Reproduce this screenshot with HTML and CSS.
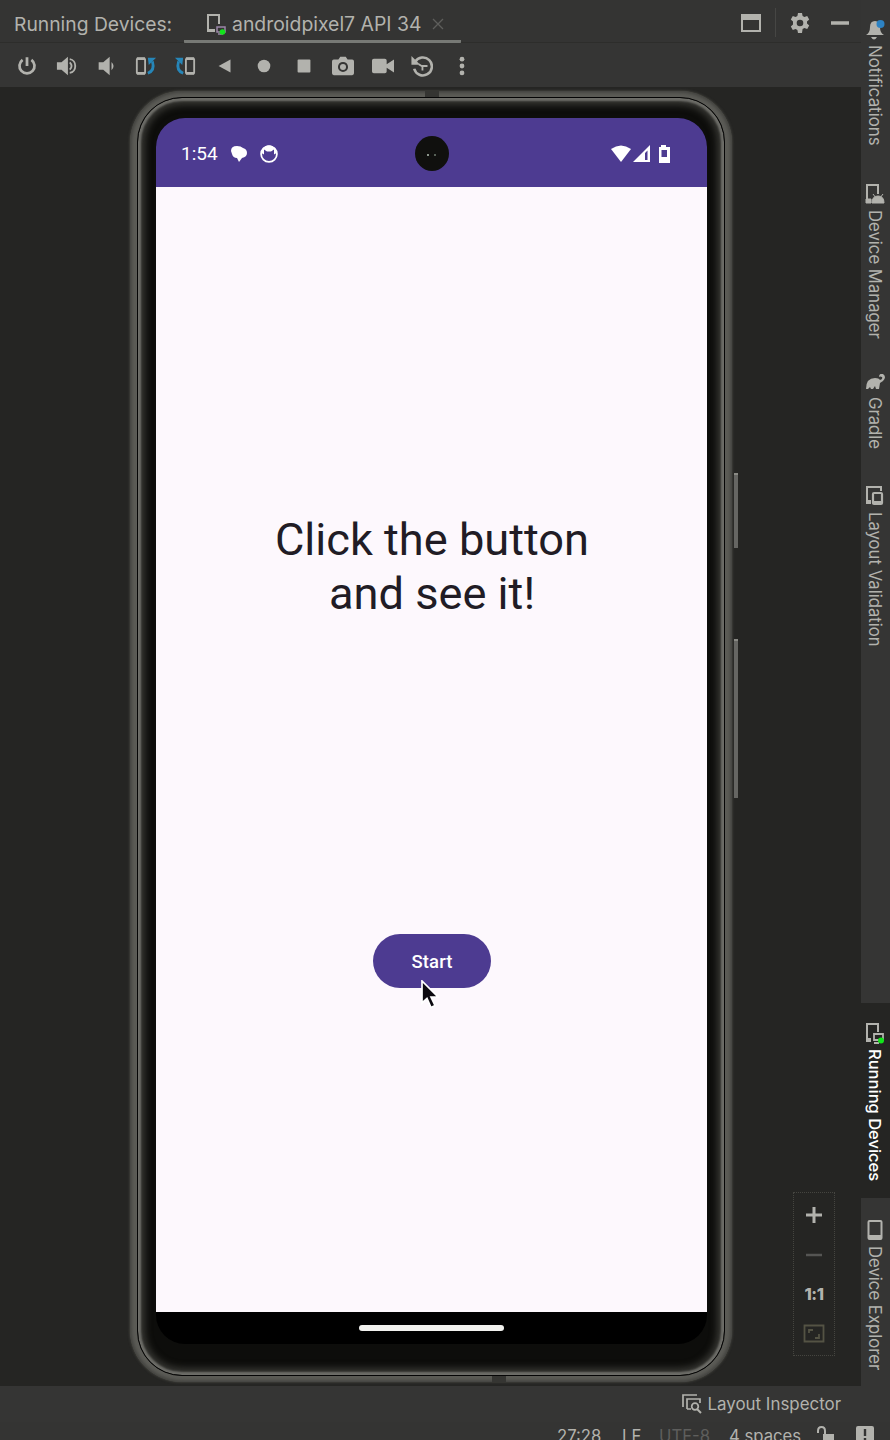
FILE: index.html
```html
<!DOCTYPE html>
<html lang="en">
<head>
<meta charset="utf-8">
<title>Running Devices</title>
<link rel="stylesheet" href="styles.css">
</head>
<body>
<div class="ide">
  <main class="panel">
    <header class="titlebar">
      <span class="title">Running Devices:</span>
      <div class="device-tab">
        <svg width="20" height="22" viewBox="0 0 20 22"><path d="M9 17H2V2h11v9" fill="none" stroke="currentColor" stroke-width="2"/><path d="M1 16h8v3H1z" fill="currentColor"/><path d="M11 14h8v5h-8zM12 21h5" fill="none" stroke="#9a86a8" stroke-width="1.500"/><circle cx="16.500" cy="19" r="2.800" fill="#12e51b"/></svg>
        <span class="tab-name">androidpixel7 API 34</span>
        <svg class="close" width="12" height="12" viewBox="0 0 12 12"><path d="M1 1l10 10M11 1L1 11" stroke="currentColor" stroke-width="1.300"/></svg>
      </div>
      <div class="window-actions">
        <svg width="20" height="20" viewBox="0 0 20 20"><path d="M0 1h20v18H0zM2 7v10h16V7z" fill="currentColor" fill-rule="evenodd"/></svg>
        <span class="divider"></span>
        <svg class="gear" width="20" height="20" viewBox="0 0 20 20"><path d="M8 0h4l.6 2.900 1.800 1 2.800-1 2 3.500-2.200 2v2.200l2.200 2-2 3.500-2.800-1-1.800 1L12 20H8l-.6-2.900-1.800-1-2.800 1-2-3.500 2.200-2V8.400l-2.200-2 2-3.500 2.800 1 1.800-1zM10 6.700a3.300 3.300 0 1 0 0 6.600 3.300 3.300 0 0 0 0-6.600z" fill="currentColor" fill-rule="evenodd"/></svg>
        <svg width="20" height="20" viewBox="0 0 20 20"><path d="M1 10h18" stroke="currentColor" stroke-width="3.500"/></svg>
      </div>
    </header>

    <nav class="toolbar">
      <span class="tool"><svg width="24" height="24" viewBox="0 0 24 24"><path d="M7.200 5.200a8.200 8.200 0 1 0 9.600 0M12 2.500v9.500" fill="none" stroke="currentColor" stroke-width="3"/></svg></span>
      <span class="tool"><svg width="24" height="24" viewBox="0 0 24 24"><path d="M1 8h5l7-6v20l-7-6H1z" fill="currentColor"/><path d="M15 8q4 4 0 8M15 4.500c8 1 8 14 0 15" fill="none" stroke="currentColor" stroke-width="2"/></svg></span>
      <span class="tool"><svg width="24" height="24" viewBox="0 0 24 24"><path d="M4 8h5l7-6v20l-7-6H4zM18 7.500q4.500 4.500 0 9z" fill="currentColor"/></svg></span>
      <span class="tool"><svg width="24" height="24" viewBox="0 0 24 24"><rect x="2" y="4" width="9" height="16" rx="1" fill="none" stroke="currentColor" stroke-width="2"/><path d="M2 4h9M2 20h9" stroke="currentColor" stroke-width="3"/><path d="M14 20q8-3 5-13" fill="none" stroke="#2686b8" stroke-width="3"/><path d="M14 3h9l-8 8z" fill="#2686b8"/></svg></span>
      <span class="tool"><svg width="24" height="24" viewBox="0 0 24 24"><rect x="13" y="4" width="9" height="16" rx="1" fill="none" stroke="currentColor" stroke-width="2"/><path d="M13 4h9M13 20h9" stroke="currentColor" stroke-width="3"/><path d="M10 20q-8-3-5-13" fill="none" stroke="#2686b8" stroke-width="3"/><path d="M10 3H1l8 8z" fill="#2686b8"/></svg></span>
      <span class="tool"><svg width="24" height="24" viewBox="0 0 24 24"><path d="M18 5v14L5 12z" fill="currentColor"/></svg></span>
      <span class="tool"><svg width="24" height="24" viewBox="0 0 24 24"><circle cx="12" cy="12" r="6.900" fill="currentColor"/></svg></span>
      <span class="tool"><svg width="24" height="24" viewBox="0 0 24 24"><rect x="5" y="5" width="14" height="14" rx="1" fill="currentColor"/></svg></span>
      <span class="tool"><svg width="24" height="24" viewBox="0 0 24 24"><path d="M7 5l2-3h6l2 3h5q2 0 2 2v13q0 2-2 2H2q-2 0-2-2V7q0-2 2-2zM12 7.500a5.500 5.500 0 1 0 0 11 5.500 5.500 0 0 0 0-11z" fill="currentColor" fill-rule="evenodd"/><circle cx="12" cy="13" r="3.300" fill="currentColor"/></svg></span>
      <span class="tool"><svg width="24" height="24" viewBox="0 0 24 24"><path d="M2 4h12q2 0 2 2v4l8-5v14l-8-5v4q0 2-2 2H2q-2 0-2-2V6q0-2 2-2z" fill="currentColor"/></svg></span>
      <span class="tool"><svg width="24" height="24" viewBox="0 0 24 24"><path d="M4.500 7.500a9.800 9.800 0 1 1-1 7.500" fill="none" stroke="currentColor" stroke-width="2.800"/><path d="M.5 1v9.500H10z" fill="currentColor"/><path d="M12.500 17v-5H18M8.500 10l4 2.500" fill="none" stroke="currentColor" stroke-width="2"/></svg></span>
      <span class="tool"><svg width="24" height="24" viewBox="0 0 24 24"><g fill="currentColor"><circle cx="12" cy="4.500" r="2.600"/><circle cx="12" cy="12" r="2.600"/><circle cx="12" cy="19.500" r="2.600"/></g></svg></span>
    </nav>

    <section class="stage">
      <div class="phone">
        <div class="bezel">
          <div class="screen">
            <div class="status">
              <span class="clock">1:54</span>
              <svg width="18" height="18" viewBox="0 0 18 18"><path d="M1 6q0-5 6-5 4 0 6 2 4 1 4 5 0 4-5 5l-3 4-2-4q-4 0-5-4z" fill="#fff"/></svg>
              <svg class="cat" width="18" height="18" viewBox="0 0 18 18"><circle cx="9" cy="9" r="7.900" fill="none" stroke="#fff" stroke-width="1.800"/><path d="M4 9.500V4.500L7 6.500h4l3-2v5l2.500-1.500-1.500-5-4-2.500H7L3 3 1.500 8z" fill="#fff"/></svg>
              <svg class="radios" width="60" height="18" viewBox="0 0 60 18"><path d="M0 4q10-7 20 0L10 17z" fill="#fff"/><path d="M22 17h17V0zM34 8v7h2.500V5.500z" fill="#fff" fill-rule="evenodd"/><path d="M48 2h2V0h5v2h4v16H48zM50.500 5v7h5.500V5z" fill="#fff" fill-rule="evenodd"/></svg>
              <span class="camera"></span>
            </div>
            <div class="app">
              <h1 class="headline">Click the button<br>and see it!</h1>
              <button class="start">Start</button>
              <svg class="cursor" width="20" height="29" viewBox="0 0 20 29"><path d="M2 1v22l5-4.500 4 9 4-2-4-8.500h7z" fill="#0c0a10" stroke="#fff" stroke-width="1.700"/></svg>
            </div>
            <div class="navbar"><span class="handle"></span></div>
          </div>
        </div>
        <i class="antenna top"></i><i class="antenna low"></i>
        <i class="key power"></i><i class="key volume"></i>
      </div>
      <div class="zoom">
        <svg width="20" height="20" viewBox="0 0 20 20"><path d="M10 2v16M2 10h16" stroke="currentColor" stroke-width="3"/></svg>
        <svg class="dim" width="20" height="20" viewBox="0 0 20 20"><path d="M2 10h16" stroke="currentColor" stroke-width="2.500"/></svg>
        <span class="ratio">1:1</span>
        <svg class="fit" width="22" height="20" viewBox="0 0 22 20"><path d="M1.500 1.500h19v16h-19zM6 9V6h4M12 14h4v-4" fill="none" stroke="currentColor" stroke-width="1.800"/></svg>
      </div>
    </section>
  </main>

  <aside class="stripe">
    <div class="tool-tab notifications"><svg width="20" height="22" viewBox="0 0 20 22"><path d="M1 16q4-2 4-8 0-6 5-6 5 0 5 6 0 6 4 8zM6 18h6q-3 5-6 0z" fill="currentColor"/><circle cx="15.500" cy="5" r="4" fill="#2d83c4"/></svg><span>Notifications</span></div>
    <div class="tool-tab manager"><svg width="20" height="22" viewBox="0 0 20 22"><path d="M6 18H2V2h11v9" fill="none" stroke="currentColor" stroke-width="2"/><path d="M1 16h5v4H1zM7 20q0-7 6-7 6 0 6 7zM8 11l3 4M18 11l-3 4" fill="currentColor" stroke="currentColor"/></svg><span>Device Manager</span></div>
    <div class="tool-tab gradle"><svg width="21" height="16" viewBox="0 0 21 16"><path d="M1 15Q1 4 10 4q4 0 5 2 3-1 2-3-2-1-3 0 0-4 4-3 4 3 0 7l-3 2-1 6h-3l-1-3-2 3H6l-1-2-2 2z" fill="currentColor"/></svg><span>Gradle</span></div>
    <div class="tool-tab validation"><svg width="20" height="22" viewBox="0 0 20 22"><path d="M6 18H2V2h14v4" fill="none" stroke="currentColor" stroke-width="2"/><rect x="8" y="8" width="9" height="11" rx="1" fill="none" stroke="currentColor" stroke-width="2.200"/><path d="M1 15h5v4H1zM8 16h9v3H8z" fill="currentColor"/></svg><span>Layout Validation</span></div>
    <div class="tool-tab active"><svg width="20" height="22" viewBox="0 0 20 22"><path d="M6 18H2V2h11v8" fill="none" stroke="currentColor" stroke-width="2"/><path d="M1 16h5v4H1z" fill="currentColor"/><path d="M9 12h9v6H9zM9 21h5" fill="none" stroke="currentColor" stroke-width="1.800"/><circle cx="16" cy="18.500" r="3" fill="#12e51b"/></svg><span>Running Devices</span></div>
    <div class="tool-tab explorer"><svg width="20" height="22" viewBox="0 0 20 22"><rect x="3.500" y="2" width="13" height="18" rx="1" fill="none" stroke="currentColor" stroke-width="2"/><path d="M3 16h14v4H3z" fill="currentColor"/></svg><span>Device Explorer</span></div>
  </aside>

  <footer class="footer">
    <div class="inspector">
      <svg width="20" height="20" viewBox="0 0 20 20"><path d="M1 13V1h14M5 15h4M5 15V5h13v4" fill="none" stroke="currentColor" stroke-width="1.700"/><circle cx="13" cy="12.500" r="3.300" fill="none" stroke="currentColor" stroke-width="1.700"/><path d="M15 15l4 4" stroke="currentColor" stroke-width="2"/></svg>
      <span>Layout Inspector</span>
    </div>
    <div class="info">
      <span class="position">27:28</span><span class="eol">LF</span><span class="encoding">UTF-8</span><span class="indent">4 spaces</span>
      <svg class="lock" width="18" height="20" viewBox="0 0 18 20"><path d="M2 7V5q0-4 3.500-4T9 5v4" fill="none" stroke="currentColor" stroke-width="2"/><path d="M7 8h11v11H7z" fill="currentColor"/></svg>
      <svg class="alert" width="18" height="20" viewBox="0 0 18 20"><path d="M2 0h14q2 0 2 2v13q0 2-2 2H2q-2 0-2-2V2q0-2 2-2zM7.800 3v7h2.400V3zM7.800 12v2.500h2.400V12z" fill="currentColor" fill-rule="evenodd"/></svg>
    </div>
  </footer>
</div>
</body>
</html>
```
FILE: styles.css
```css
* { box-sizing: border-box; }
html { overflow: hidden; }
body { margin: 0; font-family: Inter, "Liberation Sans", sans-serif; color: #b2b2ad; overflow: hidden; }
svg { display: block; flex: none; }

.ide { width: 890px; height: 1440px; display: grid; grid-template: 1386px 54px / 861px 29px; background: #353534; overflow: hidden; }
.panel { display: grid; grid-template-rows: 43px 44px 1fr; min-height: 0; }

.titlebar { display: flex; align-items: stretch; background: #343433; border-bottom: 1px solid #2d2d2b; padding-left: 14px; }
.title { width: 170px; line-height: 49px; font-size: 19.300px; white-space: nowrap; }
.device-tab { width: 277px; height: 44px; display: flex; align-items: center; gap: 6px; padding: 7px 0 0 22px; border-bottom: 4px solid #777975; border-radius: 2px; }
.tab-name { font-size: 19.400px; width: 194px; white-space: nowrap; }
.close { color: #5e5e5c; }
.window-actions { flex: 1; display: flex; align-items: center; justify-content: flex-end; padding: 3px 11px 0 0; }
.divider { width: 1px; height: 29px; background: #464644; margin: 0 14px; }
.gear { margin-right: 20px; }

.toolbar { display: flex; align-items: center; padding: 2px 0 0 7.500px; background: #353534; }
.tool { width: 39.500px; display: flex; justify-content: center; }
.tool svg { width: 22px; height: 22px; }

.stage { position: relative; background: #252523; padding: 4px 0 0 130px; }
.phone { position: relative; width: 602px; height: 1291px; padding: 6px 7px; border-radius: 52px; background: #5c5c57; box-shadow: 0 0 3px #55554d, inset 0 0 4px 1px #393936; }
.bezel { height: 100%; border: 1px solid #050505; border-radius: 45px; padding: 20px 18px 31px; background: #0d0d0b; box-shadow: inset 0 0 2px 3px #6d6d68, inset 0 0 7px 7px #373733; }
.screen { width: 551px; height: 1226px; display: flex; flex-direction: column; background: #000; border-radius: 29px; overflow: hidden; }
.status { position: relative; height: 69px; flex: none; background: #4d3b91; display: flex; align-items: center; padding: 2px 36px 0 25px; color: #fff; }
.clock { font: 19px Roboto, sans-serif; width: 49px; }
.cat { margin-left: 12px; }
.radios { margin-left: auto; }
.camera { position: absolute; left: 259px; top: 18px; width: 34px; height: 35px; border-radius: 50%; background: radial-gradient(circle at 13px 19px, #8b958b 0 1px, transparent 1.500px), radial-gradient(circle at 20px 19px, #566056 0 1px, transparent 1.500px), #10100e; }
.app { position: relative; height: 1125px; flex: none; background: #fdf8fd; display: flex; flex-direction: column; align-items: center; padding-top: 326px; }
.headline { margin: 0 0 0 1px; font: 400 45.200px/54px Roboto, sans-serif; color: #211c25; text-align: center; white-space: nowrap; }
.start { margin-top: 313px; width: 118px; height: 54px; padding: 2px 0 0 1px; border: 0; border-radius: 27px; background: #4d3b91; color: #fff; font: 500 18.500px Roboto, sans-serif; letter-spacing: .1px; }
.cursor { position: absolute; left: 264px; top: 793px; }
.navbar { flex: 1; display: flex; align-items: flex-start; justify-content: center; padding-top: 13px; }
.handle { width: 145px; height: 6px; border-radius: 3px; background: #f1f1ee; }
.antenna { position: absolute; width: 14px; height: 6px; background: #353532; }
.top { left: 295px; top: 0; }
.low { left: 362px; bottom: 0; }
.key { position: absolute; left: 604px; width: 4px; background: #666663; border-top: 2px solid #8a8a85; }
.power { top: 382px; height: 75px; }
.volume { top: 548px; height: 159px; }

.zoom { position: absolute; left: 793px; top: 1105px; width: 42px; height: 164px; border: 1px dotted #454540; display: flex; flex-direction: column; align-items: center; justify-content: space-between; padding: 12px 0 11px; }
.dim { color: #555553; }
.ratio { font-size: 16.500px; line-height: 20px; font-weight: 800; letter-spacing: -.5px; }
.fit { color: #545344; }

.stripe { background: #353534; display: flex; flex-direction: column; }
.tool-tab { display: flex; flex-direction: column; align-items: center; padding: 19px 1px 0 0; gap: 4px; font-size: 16.700px; }
.tool-tab span { writing-mode: vertical-rl; line-height: 22px; white-space: nowrap; }
.notifications { height: 165px; font-size: 16.900px; }
.manager { height: 190px; padding-top: 18px; gap: 5px; }
.gradle { height: 112px; gap: 7px; }
.validation { height: 199px; gap: 5px; padding-top: 18px; }
.active { height: 195px; margin-top: 337px; background: #252523; gap: 5px; }
.active span { color: #fff; font-weight: 500; font-size: 16.500px; }
.explorer { height: 188px; padding-top: 21px; gap: 5px; }

.footer { grid-column: 1 / -1; background: #353534; display: grid; grid-template-rows: 36px 28px; overflow: hidden; }
.inspector { display: flex; align-items: center; justify-content: flex-end; gap: 6px; padding-right: 49px; font-size: 16.900px; }
.info { display: flex; align-items: center; padding: 0 16px 0 557px; font-size: 16.700px; background: #343433; white-space: nowrap; }
.position { width: 65px; }
.eol { width: 37px; }
.encoding { width: 70px; color: #5e5e5c; }
.indent { width: 87px; }
.alert { margin-left: auto; }
```
